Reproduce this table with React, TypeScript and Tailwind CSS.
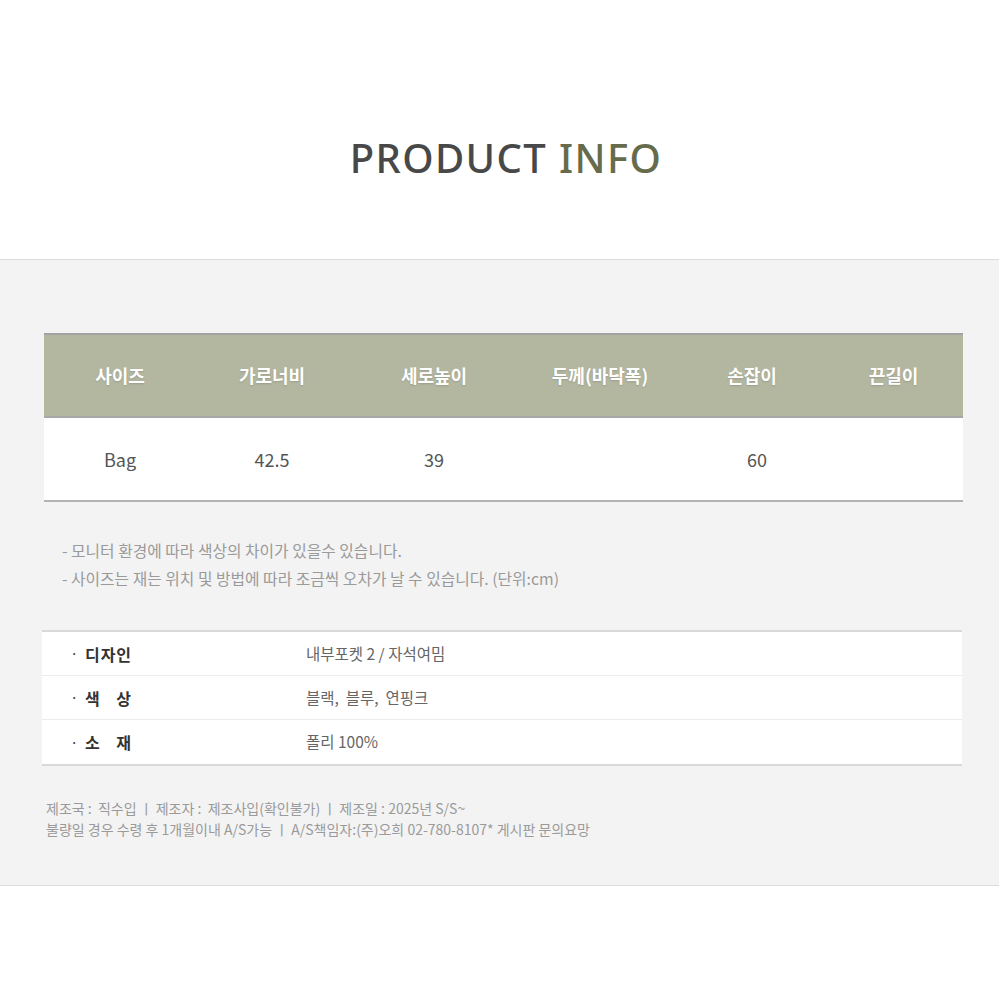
const sizeHeaders = ["사이즈", "가로너비", "세로높이", "두께(바닥폭)", "손잡이", "끈길이"];
const sizeRow = ["Bag", "42.5", "39", "", "60", ""];

const infoRows = [
  { label: ["디", "자", "인"], value: "내부포켓 2 / 자석여밈" },
  { label: ["색", "상"], value: "블랙,  블루,  연핑크" },
  { label: ["소", "재"], value: "폴리 100%" },
];

const kr = "font-['Noto_Sans_CJK_KR','Noto_Sans',sans-serif]";

export default function App() {
  return (
    <div className={`bg-white w-[1000px] min-h-[984px] ${kr}`}>
      <div className="h-[259px] pt-[130px] pl-[12px] flex justify-center">
        <h1 className="font-['Noto_Sans','Open_Sans',sans-serif] font-medium text-[40px] leading-[56px] tracking-[0.035em] text-[#484848]">
          PRODUCT <span className="text-[#666b4c]">INFO</span>
        </h1>
      </div>

      <div className="w-[999px] bg-[#f3f3f3] border-t border-b border-[#dcdcdc] pt-[73px] pb-[45px]">
        {/* size table */}
        <div className="ml-[44px] w-[919px] border-t-2 border-[#a3a3a3]">
          <div className="grid grid-cols-[152px_152px_172px_160px_144px_1fr] h-[83px] items-center bg-[#b4b7a0] border-b-2 border-[#a8a8a8]">
            {sizeHeaders.map((h) => (
              <div
                key={h}
                className="text-center text-white text-[18px] font-bold [text-shadow:0_1px_2px_rgba(0,0,0,0.15)]"
              >
                {h}
              </div>
            ))}
          </div>
          <div className="grid grid-cols-[152px_152px_172px_160px_144px_1fr] h-[84px] items-center bg-white border-b-2 border-[#b3b3b3]">
            {sizeRow.map((v, i) => (
              <div key={i} className={`text-center text-[#555] text-[18px] ${i === 4 ? "pl-[10px]" : ""}`}>
                {v}
              </div>
            ))}
          </div>
        </div>

        {/* notes */}
        <div className="mt-[35px] pl-[62px] text-[15.8px] leading-[28px] text-[#9a9a9a]">
          <p>- 모니터 환경에 따라 색상의 차이가 있을수 있습니다.</p>
          <p>- 사이즈는 재는 위치 및 방법에 따라 조금씩 오차가 날 수 있습니다. (단위:cm)</p>
        </div>

        {/* info table */}
        <div className="mt-[37px] ml-[42px] w-[920px] bg-white border-t-2 border-b-2 border-[#d8d8d8]">
          {infoRows.map((r, i) => (
            <div
              key={i}
              className={`flex items-center h-[44px] ${i < infoRows.length - 1 ? "border-b border-[#ececec]" : ""}`}
            >
              <span className="w-[43px] pl-[28px] text-[#444] text-[15px]">·</span>
              <span className="w-[46px] flex justify-between text-[16px] font-bold text-[#333]">
                {r.label.map((c, j) => (
                  <span key={j}>{c}</span>
                ))}
              </span>
              <span className="ml-[175px] text-[15.5px] text-[#666] whitespace-pre">{r.value}</span>
            </div>
          ))}
        </div>

        {/* footer */}
        <div className="mt-[32px] pl-[46px] text-[14px] leading-[21px] text-[#9a9a9a] whitespace-pre">
          <p>제조국 :  직수입 ㅣ 제조자 :  제조사입(확인불가) ㅣ 제조일 : 2025년 S/S~</p>
          <p>불량일 경우 수령 후 1개월이내 A/S가능 ㅣ A/S책임자:(주)오희 02-780-8107* 게시판 문의요망</p>
        </div>
      </div>
    </div>
  );
}
